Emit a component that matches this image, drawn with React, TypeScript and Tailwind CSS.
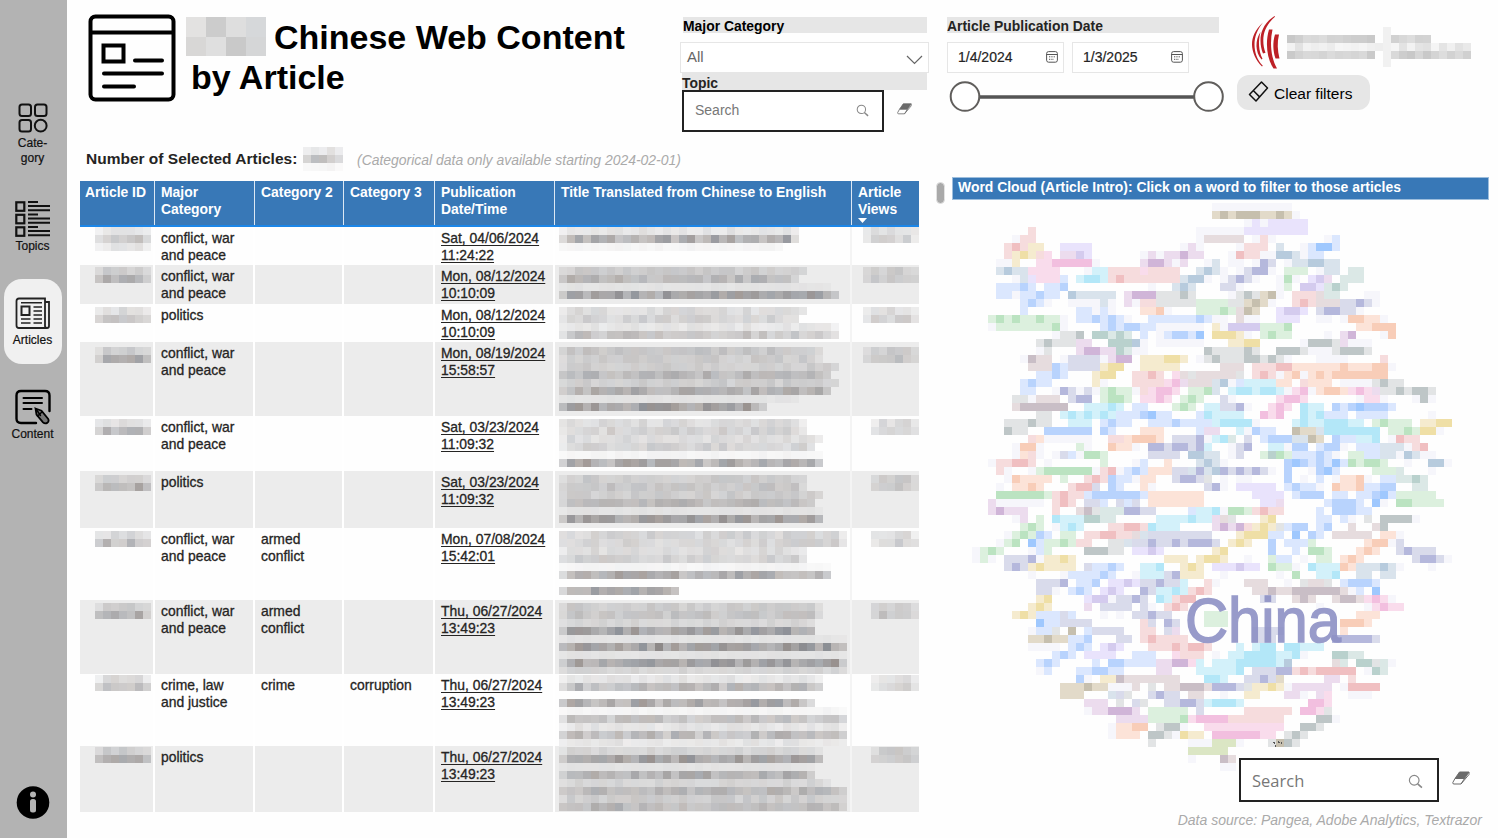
import React from "react";

/* ---------- mosaic helpers ---------- */

const PALETTE: Record<string, string> = {
  f: "#f6f6fb",
  r: "#f6dcdd", R: "#f0bfc1",
  o: "#fce3d8", O: "#f8cdb8",
  y: "#f5ebcf", Y: "#efdfa6",
  g: "#dcf0de", G: "#bbe3c1",
  l: "#dbe6c4",
  t: "#dbe8e6", T: "#b9d1cd",
  c: "#d3f1fa", C: "#b3e7f8",
  b: "#dbe7fe", B: "#b8d3fd", i: "#9fc8fe",
  s: "#d9e3ec", S: "#b7cbdd",
  n: "#d9dbeb", N: "#b5b8dc",
  v: "#e9e3fc", V: "#d4cbee",
  p: "#f9dcec", P: "#f2bfdf",
  m: "#ecdcee", M: "#d0b5d8",
  k: "#e2e4e5", K: "#bec6c7",
  w: "#e6dcde", W: "#c9bec6",
  h: "#e2dac9", H: "#c6bfae",
};

const CLOUD: string[] = [
  "30f10",
  "30h 31H 32h 33H3 36h2 38H 39h 40f",
  "34f 35v 36f 37v5",
  "7r 28f6 34v8",
  "5f 6r2 28f 29w5 35f 36r 37f 44f 45b",
  "4r 5R 6r 7y2 11v4 26f 27m 28f 33f 34r 35r2 38s 41f 42b 43i2 45b",
  "4r 5y 6Y 7y 8r 9p 11m2 13V 14v 21f 22m 23f 24m2 26M 27m2 32f 33R 34r2 36f 37f 38S2 40s 41f 42b2",
  "3f2 5y 8p2 10P5 15f 21m 22M2 24m 25f 26m 29f 30s 32f2 35f 36N 37n 39f 40s2 42S2 44s2",
  "3s 4S 5s2 7p4 14f 15c2 17r4 21p 22r4 28s 29S 30s 31f 33f 34n 35N2 37f 39g 40g2 43f 44s2 47t2",
  "5f 6s 7v 8p3 11b 13c 14C2 16c 17r 18R 19r7 26s 27S2 29f 31f 32n 33N 34n 35f 38f 39G 40f 42v 43V 44m 46t 47t2",
  "3b3 6B 7b 9b2 11B 22f 25s 26S 27s 31n2 33f 38f 39g 41V2 43v 44t 45T 46t",
  "3b2 5f 6b2 8B 9b2 12S 13s5 19m 20M3 23k3 26K 27k 32f 33k 34K 35k 36h 37H 38f 40r3 43w 44t2 49f2",
  "6b 7B 8b 9f 12f4 16s 17f 19m 20f 21r2 23k5 28g4 32k2 34h 35H 36h 37f 40r 41R 42r 43w3 46n2 48N 49n 50f",
  "6b 13b2 15f 16b 17f 21o2 23O 24f 28g3 31G 32g 33w 34H 35h 38v 39V2 41v 43n 44N2 46n2 48f",
  "2g 3G 4g 5G 6g2 8G 9g2 11f 13b2 15B 16b 17B 18b 19f 22b6 28B 29b 30f2 33w 34f2 38v3 43f2 46f 47O2 49o2 51f",
  "2f 3g6 9g 10G 11f 16b 17B 18b 19B2 21b 22b 23f6 30y 31f 32V4 36g3 39G 48o2 50O3",
  "10f 11k2 13K 15T2 17t 18T 19t 21b 23f 24b 25B2 27b 28i 30Y3 33y 34f 36g 37G 38g2 44f 46m 47M 51f 52O",
  "8k 9K 10k3 13m2 17T3 20S 21f 23f6 32y2 34Y2 41f 42K3 45k 46m 47f3",
  "8f 9k 13m 14M2 16m2 18T 19t 20f2 29K 30k2 32k2 34K 35k 38K3 41k 42f3 45k 46K3 49k",
  "6f 7W 8w2 11f 12n4 16f 17m 18M2 21y3 24Y2 26y 28f 29k 30K 31k3 34K2 36k 37K 38k 39f 43f4 51r",
  "7w3 10B 11b 12n4 16y 17Y2 21y5 31w3 35r3 38R2 40o6 46O 47o3 50O2 52f",
  "8b2 10B 11b 15y 16Y2 20r2 22R 23r 25p 26w 27k 28w5 33k 35r 36R 37r 38f 39o 40O 41f 42o 43O 44o 45O7",
  "6b 7B 8b2 15y 16f 20r4 24p 25P 26m 27w3 30s 31S 32f 33b 34c4 38o2 41r 42o3 46f4 50k 51K 52k2",
  "6b2 10f 11N 12n 13f 14n 15f 16g 17G 18g2 20f 21r 22p 23P2 25p 27g 28g 29G 30s 32c 33C2 35c 36C2 38c 39f 40p 41P 42f 43o 44O2 46o 47p 48P 49p 50m 51k2 53K 54k 55K 56K 57k",
  "5k2 7f 8w3 12n 13N2 16g 17G2 19g 21p2 23P 24p 26g 27G 28g 31n 32f 38p 39P2 41p 48f 49p2 51f 55f 56K 57f",
  "5w 6W6 14c3 17C 18c 20b2 25g 26G 27g 29c2 31n2 33N 34f 37p 38P 39p 41C 42c2 45B 46b 47B 48i 49B3 52b",
  "8k2 11c 12C 13c 14C 15c 16C 17c 18b3 21B 22i 23b2 28b 29C 30c4 36P 37p 38P 41C 42c 43C 44b3 48b4 57f",
  "4k2 6k 7K 8k2 12c3 16b 17B 18b2 22b3 25B 26b4 30c 31C4 35f 40c 41C 42c2 44C3 47c2 50g 51G 52g3 56y2 58Y2",
  "4K 5k2 9B6 16B 17b 21o3 28b 29m2 33c 34f 35B 36b2 40H 41h2 43s 44C7 52g2 54G 55g 56Y2 58f",
  "7r 8o 9f6 17r2 19o 20O3 23o 25n3 28N 29f 30c 31C 32t 34n 36b 37B3 40s2 42H 43h 45B 46b2 48c2 50C 52f 53R 54r2",
  "5f 6O2 8f 13g 14f 17O 18o2 20f 22N2 24n 25N2 27n 28N 29c 32f 33n 34N 37c2 39f 40B2 43b 44B2 46f 48b3 51s3 54f 55r 56R",
  "5f 6o 7r 8f 10f 11n 12b 13f 14G2 16g 22n4 27S2 29s2 32f 33n 36g 37T 38G 39g 40b3 43B 44b 45f 47g2 49b2 51s2 53f 54S 55s 56f2",
  "2f 3r2 5R2 7r 9f 16g 20f 21b 24o 28s 29S 30s 31f 39B 40i 41B 42b 43B 44b 45i 46b 47G 48g 49G2 51g 54f 57S2 59f",
  "3r 4f 7f 8g 9G6 15f 16r 17R 18f 19b 20B 21b 22o3 25n2 27s 28N 29s 30S 31N 32n 33N 34n 35N 36n 37f 39B 42f 43B 44i 45b 50g3 53t 57f",
  "4f 5O 6o4 11g 14r 15R 16r 17B 18b2 20f 21o2 25n 26N2 28n 29k 31f 33f2 39B 41f 43b 45f 46o2 48O 49f 51b2 53t2 55T 56t",
  "3f 5o2 7O 8o 12r 13R2 15n 17B 18b 21o 22f 29n 30N 31f 33v5 39b 40B 41b2 43f 45O 46o2 48O 49b2 51B2 55t2",
  "3G5 8G 9g 10r 11R 12r2 14b 15B3 18B3 21b 22o7 35v4 40b 41B3 45b2 48b2 50B 51i 52b 53g5",
  "2m 3f 4f5 10r 11R 12r 14n2 16b 18n 19b 20n 22o7 36v2 38m 44b 45B3 48b 50i 51f 53G2 55g4",
  "2m 3M 4m3 10r 13w 14W 15k 16t3 19N2 21n2 27b 28c2 30C 31f 32G2 34g 35r 36R 37r2 43b 45B3 48b2",
  "5f 6m 8g 10C 11c3 14T2 16t2 23c4 27C 28c2 30m 31w 32k 36y 37Y 43b2 46b 47f 49k 51K4 55f",
  "6g 7G 8g 10f 11c 12C 13c 17r2 19R2 21r 22C 23c3 30m 31M 32m 33M 34r 35y 36Y 37y 38k 39b 40B2 43b 44B 47w 50w 51K",
  "4f 5g 6G 7g 8B 9b 11g2 14r2 16R2 18r2 20w 21s 22n8 33y 34Y3 37b2 40i 42B 43b 45w 46w4 51o2 53f",
  "3f 4g 5G 7i 8b 9g2 11G 12g 13r2 17k2 19s 20n2 22N 23n2 25N 26n 27N3 30n 32y 33Y 34y 37B 39b3 42g 49o 50O2 52f 53n",
  "0f 1g 2G 3g 7f 8b 9g 14K3 17k2 20v2 22V 23v 30y 31Y 37B 40b 42G2 44g 48o 49O 50o 53n 54N 55n3",
  "0f 1g 2f 4n3 7N 8f 9y2 11Y 12y 24y3 28y 29Y2 31y 34f 37g 38b2 41f 43g2 46o 47O 48o 55n 56N2 58n 59f",
  "4n 5N 6n 7y 8Y 9y4 14n 15b2 17B 18b 21c2 23C 26y 27Y 28y 30v3 33V 34v2 37G 38g2 40f 42C 43c3 46O 47o 48s3 51S 52s 53f 57f",
  "7f 11f 12b4 16B 17b 20f 21c3 24n 25N 26y 27y2 31f 38f 40G 43c2 45C 48s2 51s2",
  "8n3 11N 13b2 15B 17v2 19V 20v 21n2 23N 24n2 26c 29r 30f 34w3 39f 41k 42w2 44k 46b 47B3 50b",
  "8n2 10f 12b 13B 14b 16v 17V 18v 21N 22n 23c2 25C 26c 27r 28R 29r 35w2 37W 38w2 40W 41W4 45W 46w 47f 48b 50i",
  "8y 9Y 14v 15V2 17f 18n2 20N 21n 23C 24c 25r 26R2 36n2 40w 41W 42w 45w 46W2 48w 49p 50P 51p 52f",
  "7y 8Y 9y 14m 16n4 21n 22f 24r 25R 26r 43f 49f 50p 51P 52p2",
  "5y 6Y 7y 8b3 11n 12b 16f 18f 20n2 22N 23n2 29g3 48o3",
  "8i 9b2 11n4 21r 22n 24N 25n 29g3 46O3 49o",
  "7f 8b2 10k 12H 14b 15n4 21r2 24n 25m 35n4 46o",
  "7h2 9H 10h2 12b2 14B 18n2 21r 22R 23r4 35n3 45N5 50n",
  "7f 8f3 12b 13B 14b 16v 17V 18v 22r3 25R 26r 27R2 29r 33c 35c 36C2 39C2 41c3",
  "10b 11B 12b 14v4 20b3 25p 26r3 30f 32c2 34C4 38c2 40C 41f 45T2 47t2",
  "8b 9B 10b 15b 17B2 19b4 23m2 25M2 27p 28c 30c3 33C5 38c 39S 45w 46t 48T2 50k 51t 52f",
  "8f 9b 13b2 15B2 17b2 23m2 28c5 33C 35n2 37n 38N2 40r 41R 42r 43R5 49f 50T 51t",
  "13B 14f 16y2 18W 19w7 29C2 31c 34n2 36N 37n 38h 44m2 47r",
  "11h3 14H 15h2 17f3 20w 22k 24w2 26W3 29w 30N 31N2 33n 34k 35y2 37Y 38y 39f 40m5 46f 47R4",
  "11h3 17s 18n 19k 22n 23N 24n2 27w2 31f 34y2 39m2 41f 43m 44p 47f3",
  "14m3 18k 20n 21k 24n2 26N2 28n 29c 30C3 33c 42P2 44p",
  "14f 15m2 17M3 20m 22g5 28n 34r6 41P2 43p 44k",
  "18m4 22g4 26G 27p 28P4 32r7 43K2 45f",
  "17f 18o2 20O2 23k 24K2 26f 29p3 31p8 41K2 43k",
  "17f 18o3 22K2 24k 25f 26Y 27y2 30P6 36p2 39k 40K 41k",
  "22k 27f3 30l2 32l 33f 37k 38H 39K 40k",
  "27l3 30l2",
  "27f 31W 32w",
  "31f2",
];

function WordCloud() {
  return (
    <svg width="490" height="568" viewBox="0 0 490 568" shapeRendering="crispEdges">
      {CLOUD.flatMap((line, row) =>
        line.split(" ").map((token, k) => {
          const m = /^(\d+)([a-zA-Z])(\d*)$/.exec(token);
          if (!m) return null;
          return (
            <rect
              key={`${row}-${k}`}
              x={Number(m[1]) * 8}
              y={row * 8}
              width={(m[3] ? Number(m[3]) : 1) * 8}
              height={8}
              fill={PALETTE[m[2]]}
            />
          );
        }),
      )}
      <text
        x="213"
        y="438.500"
        fontSize="63"
        fill="#8e91c5"
        stroke="#8e91c5"
        strokeWidth="1.500"
        textLength="156"
        lengthAdjust="spacingAndGlyphs"
        fontFamily="Liberation Sans, sans-serif"
        opacity="0.9"
      >
        China
      </text>
      <path d="M302 539l2 5M306 539l4 1" stroke="#555" strokeWidth="1.500" strokeDasharray="2 1" />
    </svg>
  );
}

const noise = (a: number, b: number) => {
  const v = Math.sin(a * 127.1 + b * 311.7) * 43758.5453;
  return v - Math.floor(v);
};

const LEVELS = [0.05, 0.13, 0.18, 0.22, 0.29, 0.34, 0.41, 0.45];

/* rows: [level, number of cells] from top to bottom; level -1 leaves a gap */
function Mosaic({ rows, seed, cols }: { rows: number[][]; seed: number; cols: number }) {
  return (
    <svg
      width={cols * 8}
      height={rows.length * 8}
      className="block shrink-0"
      shapeRendering="crispEdges"
    >
      {rows.flatMap(([level, end], y) =>
        level < 0
          ? []
          : Array.from({ length: end }, (_, x) => {
              const n = noise(x + seed * 13, y + seed * 7);
              const tint = noise(x * 3 + seed, y * 5 + 2);
              const edge = x === 0 || x === end - 1 ? 0.6 : 1;
              const a = LEVELS[level] * (0.65 + n * 0.55) * edge;
              const red = Math.round(44 + tint * 24);
              const blue = Math.round(66 - tint * 22);
              return (
                <rect
                  key={`${x}-${y}`}
                  x={x * 8}
                  y={y * 8}
                  width={8}
                  height={8}
                  fill={`rgba(${red},52,${blue},${a.toFixed(3)})`}
                />
              );
            }),
      )}
    </svg>
  );
}

/* ---------- table ---------- */

type Row = {
  height: number;
  offset: number;
  major: string[];
  cat2?: string[];
  cat3?: string;
  date: string[];
  title: number[][];
  views: number;
};

const ROWS: Row[] = [
  { height: 38, offset: 0, major: ["conflict, war", "and peace"], date: ["Sat, 04/06/2024", "11:24:22"], title: [[1, 30], [6, 30], [0, 28]], views: 7 },
  { height: 39, offset: 2, major: ["conflict, war", "and peace"], date: ["Mon, 08/12/2024", "10:10:09"], title: [[2, 31], [4, 30], [0, 34], [6, 35]], views: 7 },
  { height: 38, offset: 3, major: ["politics"], date: ["Mon, 08/12/2024", "10:10:09"], title: [[2, 31], [3, 30], [1, 35], [4, 35]], views: 7 },
  { height: 74, offset: 5, major: ["conflict, war", "and peace"], date: ["Mon, 08/19/2024", "15:58:57"], title: [[3, 33], [2, 33], [2, 35], [4, 34], [2, 35], [5, 34], [0, 30], [6, 26]], views: 7 },
  { height: 55, offset: 3, major: ["conflict, war", "and peace"], date: ["Sat, 03/23/2024", "11:09:32"], title: [[2, 31], [3, 31], [2, 33], [3, 32], [0, 33], [6, 33]], views: 6 },
  { height: 57, offset: 4, major: ["politics"], date: ["Sat, 03/23/2024", "11:09:32"], title: [[2, 31], [3, 31], [2, 33], [4, 32], [0, 33], [6, 33]], views: 6 },
  { height: 72, offset: 3, major: ["conflict, war", "and peace"], cat2: ["armed", "conflict"], date: ["Mon, 07/08/2024", "15:42:01"], title: [[3, 36], [3, 36], [2, 31], [3, 31], [0, 34], [6, 34], [-1, 0], [6, 15]], views: 6 },
  { height: 74, offset: 3, major: ["conflict, war", "and peace"], cat2: ["armed", "conflict"], date: ["Thu, 06/27/2024", "13:49:23"], title: [[2, 33], [3, 33], [1, 32], [6, 32], [0, 36], [7, 36], [0, 36], [6, 36], [1, 36]], views: 6 },
  { height: 72, offset: 1, major: ["crime, law", "and justice"], cat2: ["crime"], cat3: "corruption", date: ["Thu, 06/27/2024", "13:49:23"], title: [[1, 33], [5, 33], [-1, 0], [6, 32], [0, 36], [4, 36], [1, 36], [5, 36], [1, 36]], views: 6 },
  { height: 66, offset: 1, major: ["politics"], date: ["Thu, 06/27/2024", "13:49:23"], title: [[1, 33], [6, 33], [0, 32], [5, 32], [1, 34], [4, 36], [2, 36], [4, 36]], views: 6 },
];

const GRID = "grid grid-cols-[75px_100px_89px_91px_120px_297px_67px]";

function Lines({ items, className = "" }: { items: string[]; className?: string }) {
  return (
    <div className={`pl-[6px] pt-[3px] ${className}`}>
      {items.map((t) => (
        <div key={t} className="h-[17.3px] whitespace-nowrap">{t}</div>
      ))}
    </div>
  );
}

function ArticleTable() {
  const head = "border-r border-[#dce8f4] pl-[6px] pt-[3px] h-full";
  return (
    <div className="ml-[13px] w-[839px]">
      <div className={`${GRID} h-[46px] border-b-2 border-[#1b86e8] bg-[#3878b7] text-[13.9px] font-bold leading-[17px] text-white`}>
        <div className="h-full border-r border-[#dce8f4] pl-[5px] pt-[3px]">Article ID</div>
        <div className={head}>Major<br />Category</div>
        <div className={head}>Category 2</div>
        <div className={head}>Category 3</div>
        <div className={head}>Publication<br />Date/Time</div>
        <div className={head}>Title Translated from Chinese to English</div>
        <div className="pl-[6px] pt-[3px]">
          Article<br />Views
          <svg width="10" height="5" className="block"><path d="M0 0h9L4.500 5z" fill="#fff" /></svg>
        </div>
      </div>
      {ROWS.map((row, i) => (
        <div
          key={i}
          style={{ height: row.height }}
          className={`${GRID} overflow-hidden text-[13.9px] leading-[17.3px] text-[#252423] [-webkit-text-stroke:0.3px_#252423] ${i % 2 ? "bg-[#ececec]" : "bg-[#fefefe]"}`}
        >
          <div className="h-full border-r-2 border-white pl-[15px]" style={{ paddingTop: row.offset }}>
            <Mosaic cols={7} seed={i + 40} rows={i === 0 ? [[1, 7], [4, 7], [1, 7]] : [[2, 7], [5, 7]]} />
          </div>
          <div className="h-full border-r-2 border-white"><Lines items={row.major} /></div>
          <div className="h-full border-r-2 border-white"><Lines items={row.cat2 ?? []} /></div>
          <div className="h-full border-r-2 border-white"><Lines items={row.cat3 ? [row.cat3] : []} /></div>
          <div className="h-full border-r-2 border-white"><Lines items={row.date} className="underline underline-offset-2" /></div>
          <div className="h-full border-r-2 border-[#f4f4f4] pl-[4px]" style={{ paddingTop: row.offset }}>
            <Mosaic cols={36} seed={i + 1} rows={row.title} />
          </div>
          <div className="flex h-full justify-end" style={{ paddingTop: row.offset }}>
            <Mosaic cols={row.views} seed={i + 70} rows={[[2, row.views], [3, row.views]]} />
          </div>
        </div>
      ))}
    </div>
  );
}

/* ---------- icons ---------- */

function PageIcon() {
  return (
    <svg width="88" height="88" viewBox="0 0 88 88" fill="none" stroke="#000" strokeWidth="4" strokeLinecap="round" strokeLinejoin="round">
      <rect x="2.500" y="2.500" width="83" height="83" rx="5" />
      <path d="M3 18.500h82M47 46.500h27M16 59.500h58M16 72.500h30" />
      <path d="M15.500 31.500h20v16h-20z" strokeLinejoin="miter" />
    </svg>
  );
}

function CategoryIcon() {
  return (
    <svg width="30" height="30" viewBox="0 0 30 30" fill="none" stroke="#111" strokeWidth="2">
      <rect x="1.500" y="1.500" width="11.500" height="11.500" rx="2.500" />
      <rect x="17" y="1.500" width="11.500" height="11.500" rx="2.500" />
      <rect x="1.500" y="17" width="11.500" height="11.500" rx="2.500" />
      <circle cx="22.700" cy="22.700" r="5.900" />
    </svg>
  );
}

function TopicsIcon() {
  return (
    <svg width="36" height="38" viewBox="0 0 36 38" fill="none" stroke="#111">
      {[0, 12.5, 25].map((y) => (
        <g key={y}>
          <rect x="1.300" y={y + 1.3} width="8" height="8.500" strokeWidth="2.200" />
          <path d={`M13 ${y + 1}h10`} strokeWidth="2" />
          <path d={`M13 ${y + 5}h22M13 ${y + 9.3}h22`} strokeWidth="2" />
        </g>
      ))}
    </svg>
  );
}

function ArticlesIcon() {
  return (
    <svg width="36" height="33" viewBox="0 0 36 33" fill="none" stroke="#222" strokeWidth="1.800">
      <path d="M4 1.500h26v27.500q0 2 2 2H4q-2.500 0-2.500-2.500V4q0-2.500 2.500-2.500z" />
      <path d="M30 5h4v24q0 2-2 2" />
      <rect x="6.500" y="9.500" width="8" height="8.500" strokeWidth="2" />
      <path d="M6 5.800h21M18.500 10h8.500M18.500 14h8.500M18.500 18h8.500M6 22h9.500M18.500 22h8.500M6 26h9.500M18.500 26h8.500" strokeWidth="1.500" />
    </svg>
  );
}

function ContentIcon() {
  return (
    <svg width="36" height="36" viewBox="0 0 36 36" fill="none" stroke="#000" strokeWidth="2.400" strokeLinecap="round">
      <path d="M21 34H6q-4.500 0-4.500-4.500v-23Q1.500 2 6 2h24q4.500 0 4.500 4.500V22" />
      <path d="M8.500 9h18.500M8.500 14h18.500M8.500 20h8" strokeWidth="2" />
      <path d="M20.500 19.500l6 2.200 6.500 8q1.500 3-.8 4.200t-4.200-.6l-6.500-7.800z" strokeWidth="1.800" fill="#777" />
      <path d="M21 20l4.500 6.500M22.500 27l4.500-4" strokeWidth="1.500" />
    </svg>
  );
}

function SearchIcon({ size }: { size: number }) {
  return (
    <svg width={size} height={size} viewBox="0 0 14 14" fill="none" stroke="#888" strokeWidth="1.100">
      <circle cx="5.800" cy="5.800" r="4.500" />
      <path d="M9 9.200l4 3.600" strokeWidth="1.500" />
    </svg>
  );
}

function EraserIcon({ width }: { width: number }) {
  return (
    <svg width={width} height={(width * 14) / 18} viewBox="0 0 18 14" fill="none" stroke="#6b6b6b" strokeLinejoin="round">
      <path d="M7.500 1h9.500l-4.500 6.500H3z" fill="#6b6b6b" />
      <path d="M3 7.500L.8 11.500q-.3 1.500 1.200 1.500h7l3.500-5.500M9 13L17 3.500V1" />
    </svg>
  );
}

function CalendarIcon() {
  return (
    <svg width="12" height="12" viewBox="0 0 12 12" fill="none" stroke="#555">
      <rect x=".6" y=".6" width="10.800" height="10.600" rx="2" />
      <path d="M.6 3.500h10.800" />
      <path d="M3 5.800h6.500M3 8.300h5" strokeDasharray="1.300 1" />
    </svg>
  );
}

function WaveLogo() {
  return (
    <svg width="30" height="54" viewBox="0 0 30 54" fill="#bd2026">
      <path d="M12 6.500C4 14 1 21 1 28.500S5 45 11 50.500l.8-.8C6 44 3.500 36 3.500 28.500S6 14 12 6.500z" />
      <path d="M23.500 0C13 7 9.500 16 9.500 24.500c0 5 1 9.500 2.500 13l2.500-.8c-1.500-4-2.200-8-2.200-12C12.300 15 16 8 24 .8z" />
      <path d="M9.500 16C4 24 4 36 10.500 43.500l1-.8C7.500 35 7 25 9.500 16z" />
      <path d="M21.500 13.500h-3.500C14 27 16 43 22.500 52.500h3.500C20 42 18.500 27 21.500 13.500z" />
      <path d="M28 18.500h-4c-2.500 8-2 16.500.5 24h4c-2-8-2.500-16-.5-24z" />
    </svg>
  );
}

/* ---------- page sections ---------- */

function Sidebar() {
  const label = "text-center text-[12px] leading-[15px] text-[#111] [-webkit-text-stroke:0.2px_#111]";
  return (
    <nav className="flex h-full w-[67px] shrink-0 flex-col items-center bg-[#b3b3b3] pr-[2px]">
      <div className="mt-[103px] flex h-[98px] flex-col items-center">
        <CategoryIcon />
        <div className={`${label} mt-[3px]`}>Cate-<br />gory</div>
      </div>
      <div className="flex h-[78px] flex-col items-center">
        <TopicsIcon />
        <div className={label}>Topics</div>
      </div>
      <div className="flex h-[85px] w-[58px] flex-col items-center rounded-[18px] bg-[#f0f0f0] pt-[18px]">
        <ArticlesIcon />
        <div className={`${label} mt-[3px]`}>Articles</div>
      </div>
      <div className="mt-[25px] flex flex-col items-center">
        <ContentIcon />
        <div className={`${label} mt-[2px]`}>Content</div>
      </div>
      <div className="mb-[19px] mt-auto">
        <svg width="34" height="33" viewBox="0 0 34 33" className="block">
          <circle cx="17" cy="16.500" r="16.300" />
          <circle cx="17" cy="8.500" r="3" fill="#b3b3b3" />
          <rect x="14" y="13" width="6" height="13.500" rx="2.500" fill="#b3b3b3" />
        </svg>
      </div>
    </nav>
  );
}

function DateBox({ value }: { value: string }) {
  return (
    <div className="flex h-[31px] w-[117px] items-center justify-between border border-[#e6e6e6] bg-white pl-[10px] pr-[5px] text-[14px] text-[#252423] [-webkit-text-stroke:0.2px_#252423]">
      <span>{value}</span>
      <div className="pb-[2px]"><CalendarIcon /></div>
    </div>
  );
}

const BLURRED = [
  ["#e3e2e1", "#cccccc", "#dedede", "#d6d8da"],
  ["#d8d7d6", "#dfdfdf", "#c9c9c9", "#d5d6d7"],
];

export default function App() {
  return (
    <div className="flex h-[838px] w-[1498px] overflow-hidden bg-[#fefefe] font-['Liberation_Sans',Arial,sans-serif]">
      <Sidebar />

      <section className="flex w-[870px] shrink-0 flex-col">
        <header className="flex h-[145px]">
          <div className="ml-[21px] mt-[14px] w-[88px]"><PageIcon /></div>
          <h1 className="ml-[10px] mt-[17px] w-[494px] text-[34px] font-bold leading-[40px] text-black">
            <div className="flex whitespace-nowrap">
              <svg width="80" height="39" viewBox="0 0 80 39" className="mr-[8px] shrink-0">
                {BLURRED.flatMap((r, y) => r.map((c, x) => <rect key={`${x}${y}`} x={x * 20} y={y * 20} width="20" height="20" fill={c} />))}
              </svg>
              Chinese Web Content
            </div>
            <div className="pl-[5px]">by Article</div>
          </h1>
          <div className="mt-[17px] w-[250px]">
            <div className="ml-[3px] h-[16px] w-[244px] whitespace-nowrap bg-[#e6e6e6] text-[13.9px] font-bold leading-[18px] text-black">Major Category</div>
            <div className="mt-[9px] flex h-[31px] w-[249px] items-center justify-between border border-[#e6e6e6] bg-white pl-[6px] pr-[5px] text-[15px] text-[#666]">
              All
              <svg width="17" height="10" className="mt-[5px]" fill="none" stroke="#666" strokeWidth="1.200"><path d="M1 1l7.500 7.500L16 1" /></svg>
            </div>
            <div className="ml-[2px] h-[17px] w-[245px] bg-[#e6e6e6] text-[13.900px] font-bold leading-[20px] text-[#252423]">Topic</div>
            <div className="flex items-start">
              <div className="ml-[2px] flex h-[42px] w-[202px] items-center justify-between border-2 border-[#222] bg-white pb-[2px] pl-[11px] pr-[13px] text-[14px] text-[#777]">
                Search
                <SearchIcon size={13} />
              </div>
              <div className="ml-[13px] mt-[13px]"><EraserIcon width={15} /></div>
            </div>
          </div>
        </header>

        <div className="flex h-[36px] items-start whitespace-nowrap pl-[19px]">
          <div className="mt-[4px] w-[217px] text-[15.500px] font-bold leading-[20px] text-[#252423]">Number of Selected Articles:</div>
          <div className="mt-[2px] w-[54px]"><Mosaic cols={5} seed={91} rows={[[1, 5], [4, 5], [0, 5]]} /></div>
          <div className="mt-[6px] text-[13.950px] italic leading-[18px] text-[#aaa]">(Categorical data only available starting 2024-02-01)</div>
        </div>

        <ArticleTable />
      </section>

      <section className="flex w-[561px] flex-col">
        <div className="flex h-[177px] pl-[10px] pt-[17px]">
          <div className="w-[289px]">
            <div className="h-[16px] w-[272px] bg-[#e6e6e6] text-[13.900px] font-bold leading-[18px] text-[#252423]">Article Publication Date</div>
            <div className="mt-[9px] flex gap-[8px]">
              <DateBox value="1/4/2024" />
              <DateBox value="1/3/2025" />
            </div>
            <svg width="280" height="34" className="mt-[7px] block" fill="#fff" stroke="#605e5c">
              <path d="M30 17h220" strokeWidth="3.500" stroke="#555" />
              <circle cx="18" cy="16.500" r="14.300" strokeWidth="2" />
              <circle cx="261.500" cy="16.500" r="14.300" strokeWidth="2" />
            </svg>
          </div>
          <div>
            <div className="flex h-[58px] pl-[15px]">
              <div className="mt-[-1px] w-[36px]"><WaveLogo /></div>
              <svg width="184" height="40" viewBox="0 0 184 40" className="mt-[10px]" shapeRendering="crispEdges">
                {Array.from({ length: 23 }, (_, x) =>
                  [0, 1, 2].map((y) => {
                    if ((y === 0 && x > 17) || (x === 11 && y !== 1)) return null;
                    const g = Math.round((y === 1 ? 224 : 200) + noise(x, y) * 22);
                    return <rect key={`${x}-${y}`} x={x * 8} y={8 + y * 8} width="8" height="8" fill={`rgb(${g},${g},${g})`} />;
                  }),
                )}
                <rect x="96" y="0" width="8" height="40" fill="#f1f1f1" />
              </svg>
            </div>
            <button className="ml-[1px] flex h-[35px] w-[133px] items-center rounded-[12px] bg-[#e6e6e6] pl-[11px] text-[15.500px] text-black">
              <svg width="21" height="21" viewBox="0 0 21 21" className="mb-[2px] mr-[5px]" fill="none" stroke="#111" strokeWidth="1.500" strokeLinejoin="round">
                <path d="M13.500 1l6 6L8 20l-6.500-6.500zM5.500 9.800l6.300 6.300" />
              </svg>
              <span className="pt-[2px]">Clear filters</span>
            </button>
          </div>
        </div>

        <div className="flex h-[26px] items-start">
          <div className="ml-[-1px] mt-[5px] h-[22px] w-[9px] shrink-0 rounded-full border border-[#e2e2e2] bg-[#a9a9a9]" />
          <div className="ml-[7px] h-[23px] w-[537px] border border-[#9dbedd] bg-[#3878b7] pl-[5px] text-[13.930px] font-bold leading-[19px] text-white">
            Word Cloud (Article Intro): Click on a word to filter to those articles
          </div>
        </div>

        <div className="h-[555px] pl-[35px]"><WordCloud /></div>

        <div className="relative z-10 flex items-start pl-[302px]">
          <div className="flex h-[44px] w-[200px] items-center justify-between border-2 border-[#222] bg-white pl-[11px] pr-[14px] pt-[2px] font-['Open_Sans',sans-serif] text-[16.500px] text-[#777]">
            Search
            <SearchIcon size={15} />
          </div>
          <div className="ml-[13px] mt-[13px]"><EraserIcon width={18} /></div>
        </div>
        <div className="mt-[9px] whitespace-nowrap pr-[16px] text-right text-[14px] italic leading-[18px] text-[#aaa]">
          Data source: Pangea, Adobe Analytics, Textrazor
        </div>
      </section>
    </div>
  );
}
